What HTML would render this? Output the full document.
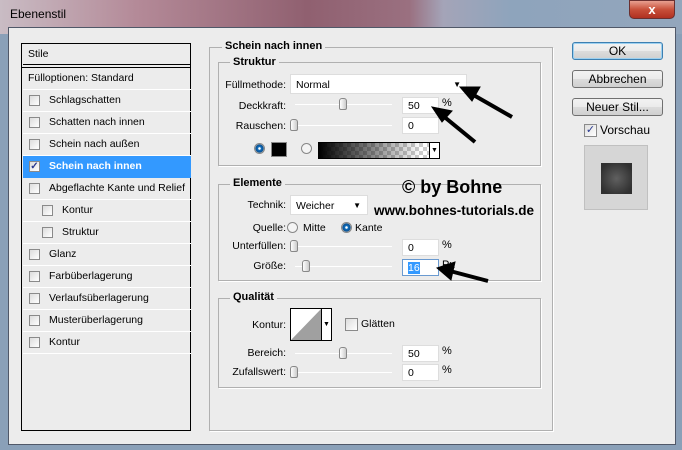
<!DOCTYPE html>
<html><head><meta charset="utf-8"><style>
*{margin:0;padding:0;box-sizing:border-box}
body{width:682px;height:450px;overflow:hidden;position:relative;font-family:"Liberation Sans",sans-serif;font-size:11px;color:#000;background:#8aa0b8}
.a{position:absolute}
.title{left:0;top:0;width:682px;height:34px;background:linear-gradient(90deg,#c9bcc4 0%,#b48a98 20%,#906070 45%,#9a7080 60%,#a4a4b8 65%,#8ea4bc 75%,#93a6bc 100%)}
.body{left:8px;top:27px;width:668px;height:418px;background:#ececec;border:1px solid #505868}
.box{border:1px solid #000;background:#ececec}
.row{position:absolute;left:1px;width:168px;height:22px;border-bottom:1px solid #fff;line-height:21px;padding-left:26px;font-size:10.5px}
.cb{position:absolute;width:11px;height:11px;border:1px solid #8a8a8a;background:linear-gradient(135deg,#ddd,#fff)}
.grp{border:1px solid #b0b0b0;box-shadow:1px 1px 0 #fff}
.lg{position:absolute;background:#ececec;font-weight:bold;font-size:11px;padding:0 3px}
.in{position:absolute;background:#fff;border:1px solid #ddd;height:17px;font-size:10.5px;line-height:17px;padding-left:5px}
.lbl{position:absolute;text-align:right;font-size:10.5px}
.sl{position:absolute;height:1px;background:#a8a8a8;border-bottom:1px solid #fff}
.th{position:absolute;width:8px;height:12px;border:1px solid #888;border-radius:3px 3px 2px 2px;background:linear-gradient(90deg,#fff,#ccc)}
.btn{position:absolute;left:572px;width:91px;height:18px;border:1px solid #707070;border-radius:3px;background:linear-gradient(#f2f2f2,#ebebeb 50%,#dcdcdc 51%,#cfcfcf);text-align:center;line-height:16px;font-size:12px}
.rad{position:absolute;width:11px;height:11px;border-radius:50%;border:1px solid #888;background:#f4f4f4}
</style></head><body>
<div class="a title"></div>
<div class="a" style="left:10px;top:7px;font-size:12px;color:#000">Ebenenstil</div>
<div class="a" style="left:629px;top:0;width:46px;height:19px;border-radius:0 0 5px 5px;background:linear-gradient(#e8a090,#c8503a 50%,#b03020);border:1px solid #6a3030;color:#fff;text-align:center;font-weight:bold;font-size:13px;line-height:17px">x</div>
<div class="a body"></div>

<div class="a box" style="left:21px;top:43px;width:170px;height:388px">
 <div class="row" style="top:0;height:21px;padding-left:5px;border-bottom:1px solid #000">Stile</div>
 <div class="a" style="left:0;top:23px;width:168px;height:1px;background:#000"></div>
 <div class="row" style="top:24px;padding-left:5px">Fülloptionen: Standard</div>
 <div class="row" style="top:46px"><span class="cb" style="left:6px;top:5px"></span>Schlagschatten</div>
 <div class="row" style="top:68px"><span class="cb" style="left:6px;top:5px"></span>Schatten nach innen</div>
 <div class="row" style="top:90px"><span class="cb" style="left:6px;top:5px"></span>Schein nach außen</div>
 <div class="row" style="top:112px;background:#3399ff;color:#fff;font-weight:bold;border-bottom:none"><span class="cb" style="left:6px;top:5px;color:#2a3a90;font-size:10px;line-height:9px;text-align:center">✓</span>Schein nach innen</div>
 <div class="row" style="top:134px"><span class="cb" style="left:6px;top:5px"></span>Abgeflachte Kante und Relief</div>
 <div class="row" style="top:156px;padding-left:39px"><span class="cb" style="left:19px;top:5px"></span>Kontur</div>
 <div class="row" style="top:178px;padding-left:39px"><span class="cb" style="left:19px;top:5px"></span>Struktur</div>
 <div class="row" style="top:200px"><span class="cb" style="left:6px;top:5px"></span>Glanz</div>
 <div class="row" style="top:222px"><span class="cb" style="left:6px;top:5px"></span>Farbüberlagerung</div>
 <div class="row" style="top:244px"><span class="cb" style="left:6px;top:5px"></span>Verlaufsüberlagerung</div>
 <div class="row" style="top:266px"><span class="cb" style="left:6px;top:5px"></span>Musterüberlagerung</div>
 <div class="row" style="top:288px"><span class="cb" style="left:6px;top:5px"></span>Kontur</div>
</div>

<div class="a grp" style="left:209px;top:47px;width:344px;height:384px"></div>
<div class="lg" style="left:222px;top:40px">Schein nach innen</div>

<div class="a grp" style="left:218px;top:62px;width:323px;height:104px"></div>
<div class="lg" style="left:230px;top:56px">Struktur</div>
<div class="lbl" style="left:222px;top:79px;width:64px">Füllmethode:</div>
<div class="in" style="left:290px;top:74px;width:177px;height:20px;line-height:20px">Normal<span style="position:absolute;right:5px;top:0;font-size:8px">▼</span></div>
<div class="lbl" style="left:222px;top:100px;width:64px">Deckkraft:</div>
<div class="sl" style="left:295px;top:104px;width:97px"></div><div class="th" style="left:339px;top:98px"></div>
<div class="in" style="left:402px;top:97px;width:37px">50</div><div class="a" style="left:442px;top:97px">%</div>
<div class="lbl" style="left:222px;top:120px;width:64px">Rauschen:</div>
<div class="sl" style="left:295px;top:125px;width:97px"></div><div class="th" style="left:290px;top:119px"></div>
<div class="in" style="left:402px;top:117px;width:37px">0</div>
<div class="rad" style="left:254px;top:143px;background:radial-gradient(#fff 0 15%,#1070c0 25%,#0a5090 60%,#ccc 70%)"></div>
<div class="a" style="left:271px;top:142px;width:16px;height:15px;background:#000;border:1px solid #888"></div>
<div class="rad" style="left:301px;top:143px"></div>
<div class="a" style="left:318px;top:142px;width:122px;height:17px;border:1px solid #000;background:linear-gradient(90deg,#000,rgba(0,0,0,0) 85%),repeating-conic-gradient(#ccc 0 25%,#fff 0 50%) 0 0/8px 8px"><span style="position:absolute;right:0;top:0;width:10px;height:15px;background:#fff;border-left:1px solid #000;font-size:7px;text-align:center;line-height:15px">▼</span></div>

<div class="a grp" style="left:218px;top:184px;width:323px;height:97px"></div>
<div class="lg" style="left:230px;top:177px">Elemente</div>
<div class="lbl" style="left:222px;top:199px;width:64px">Technik:</div>
<div class="in" style="left:290px;top:195px;width:78px;height:20px;line-height:20px">Weicher<span style="position:absolute;right:6px;top:0;font-size:8px">▼</span></div>
<div class="lbl" style="left:222px;top:222px;width:64px">Quelle:</div>
<div class="rad" style="left:287px;top:222px"></div><div class="a" style="left:303px;top:222px;font-size:10.5px">Mitte</div>
<div class="rad" style="left:341px;top:222px;background:radial-gradient(#fff 0 15%,#1070c0 25%,#0a5090 60%,#ccc 70%)"></div><div class="a" style="left:355px;top:222px;font-size:10.5px">Kante</div>
<div class="lbl" style="left:222px;top:240px;width:64px">Unterfüllen:</div>
<div class="sl" style="left:295px;top:246px;width:97px"></div><div class="th" style="left:290px;top:240px"></div>
<div class="in" style="left:402px;top:239px;width:37px">0</div><div class="a" style="left:442px;top:239px">%</div>
<div class="lbl" style="left:222px;top:260px;width:64px">Größe:</div>
<div class="sl" style="left:295px;top:266px;width:97px"></div><div class="th" style="left:302px;top:260px"></div>
<div class="in" style="left:402px;top:259px;width:37px;border-color:#6a9ad0"><span style="background:#3399ff;color:#fff">16</span></div><div class="a" style="left:442px;top:259px">Px</div>

<div class="a grp" style="left:218px;top:298px;width:323px;height:90px"></div>
<div class="lg" style="left:230px;top:291px">Qualität</div>
<div class="lbl" style="left:222px;top:319px;width:64px">Kontur:</div>
<div class="a" style="left:290px;top:308px;width:42px;height:33px;border:1px solid #000;background:#fff"><svg width="30" height="31" style="position:absolute;left:0;top:0"><polygon points="0,31 30,0 30,31" fill="#a0a0a0"/></svg><span style="position:absolute;right:0;top:0;width:10px;height:31px;border-left:1px solid #000;font-size:7px;text-align:center;line-height:31px">▼</span></div>
<div class="cb" style="left:345px;top:318px;width:13px;height:13px"></div><div class="a" style="left:361px;top:318px;font-size:10.5px">Glätten</div>
<div class="lbl" style="left:222px;top:347px;width:64px">Bereich:</div>
<div class="sl" style="left:295px;top:353px;width:97px"></div><div class="th" style="left:339px;top:347px"></div>
<div class="in" style="left:402px;top:345px;width:37px">50</div><div class="a" style="left:442px;top:345px">%</div>
<div class="lbl" style="left:222px;top:366px;width:64px">Zufallswert:</div>
<div class="sl" style="left:295px;top:372px;width:97px"></div><div class="th" style="left:290px;top:366px"></div>
<div class="in" style="left:402px;top:364px;width:37px">0</div><div class="a" style="left:442px;top:364px">%</div>

<div class="a" style="left:402px;top:177px;font-weight:bold;font-size:18px">© by Bohne</div>
<div class="a" style="left:374px;top:203px;font-weight:bold;font-size:13.5px">www.bohnes-tutorials.de</div>

<div class="btn" style="top:42px;border-color:#3c7fb1;box-shadow:0 0 0 1px #9cd0f0 inset">OK</div>
<div class="btn" style="top:70px">Abbrechen</div>
<div class="btn" style="top:98px">Neuer Stil...</div>
<div class="cb" style="left:584px;top:124px;width:13px;height:13px;color:#2a3a90;font-size:11px;line-height:11px;text-align:center">✓</div>
<div class="a" style="left:600px;top:123px;font-size:12px">Vorschau</div>
<div class="a" style="left:584px;top:145px;width:64px;height:65px;background:#d6d6d6;border:1px solid #c0c0c0"></div>
<div class="a" style="left:601px;top:163px;width:31px;height:31px;background:radial-gradient(#606060,#303030 80%)"></div>

<svg class="a" style="left:0;top:0" width="682" height="450">
<g stroke="#000" stroke-width="4" fill="#000">
<line x1="512" y1="117" x2="470" y2="93"/><polygon points="460,87 480,87 472,101" stroke-width="1"/>
<line x1="475" y1="142" x2="442" y2="115"/><polygon points="432,107 452,111 442,122" stroke-width="1"/>
<line x1="488" y1="281" x2="450" y2="271"/><polygon points="437,268 455,262 451,280" stroke-width="1"/>
</g></svg>
</body></html>
